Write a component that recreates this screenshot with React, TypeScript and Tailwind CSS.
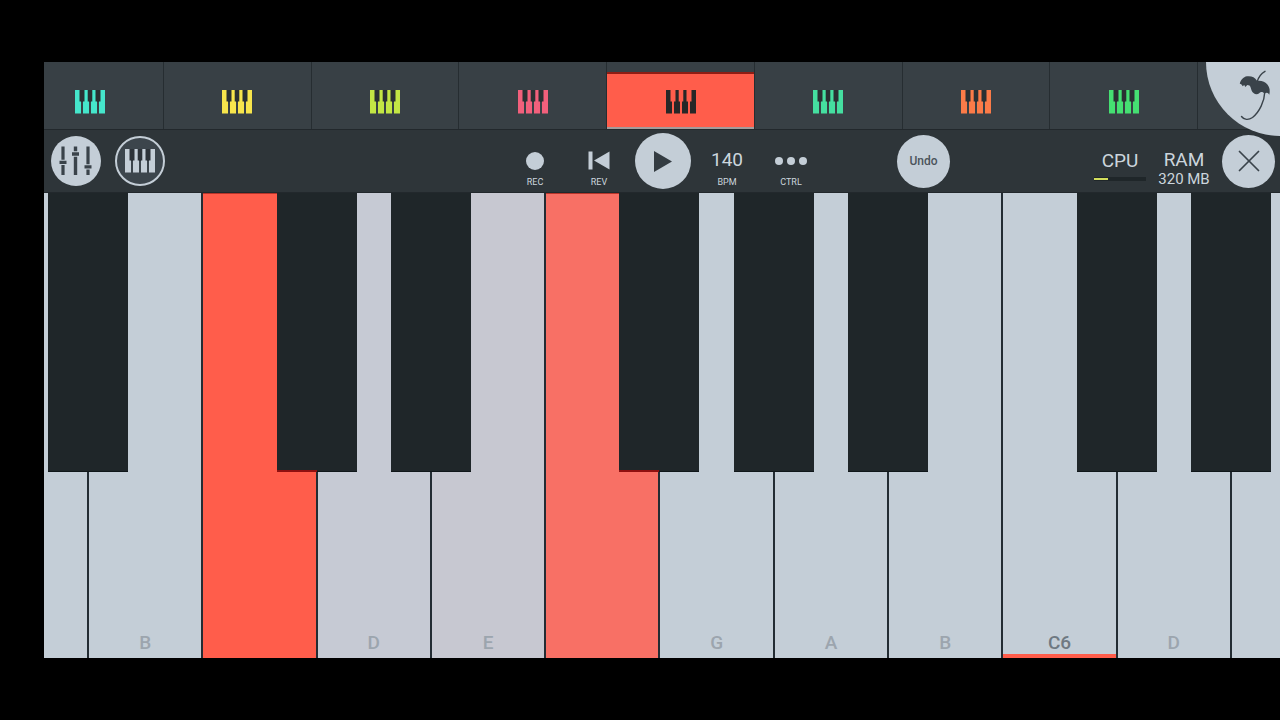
import type { ReactNode } from 'react';
import { X } from 'lucide-react';

const channels = [
  { name: 'Channel 1', color: 'text-[#45e6cb]', cell: 'w-30 pr-7' },
  { name: 'Channel 2', color: 'text-[#f7e54c]', cell: 'flex-1' },
  { name: 'Channel 3', color: 'text-[#c3e644]', cell: 'flex-1' },
  { name: 'Channel 4', color: 'text-[#f2607c]', cell: 'flex-1' },
  { name: 'Channel 5', color: 'text-[#272727]', cell: 'flex-1', selected: true },
  { name: 'Channel 6', color: 'text-[#45dfa0]', cell: 'flex-1' },
  { name: 'Channel 7', color: 'text-[#fb7b48]', cell: 'flex-1' },
  { name: 'Channel 8', color: 'text-[#45df72]', cell: 'flex-1' },
];

type PianoKey = {
  id: string;
  label?: string;
  sharp?: boolean;
  fill: string;
  width: string;
  pressed?: boolean;
  root?: boolean;
};

const idle = 'bg-[#c4ced7]';

const keys: PianoKey[] = [
  { id: 'A4', sharp: true, fill: idle, width: 'w-[45px]' },
  { id: 'B4', label: 'B', fill: idle, width: 'flex-1' },
  { id: 'C5', sharp: true, fill: 'bg-[#ff5d4b]', width: 'flex-1', pressed: true },
  { id: 'D5', label: 'D', sharp: true, fill: 'bg-[#c6cad4]', width: 'flex-1' },
  { id: 'E5', label: 'E', fill: 'bg-[#c7c8d1]', width: 'flex-1' },
  { id: 'F5', sharp: true, fill: 'bg-[#f87065]', width: 'flex-1', pressed: true },
  { id: 'G5', label: 'G', sharp: true, fill: idle, width: 'flex-1' },
  { id: 'A5', label: 'A', sharp: true, fill: idle, width: 'flex-1' },
  { id: 'B5', label: 'B', fill: idle, width: 'flex-1' },
  { id: 'C6', label: 'C6', sharp: true, fill: idle, width: 'flex-1', root: true },
  { id: 'D6', label: 'D', sharp: true, fill: idle, width: 'flex-1' },
  { id: 'E6', fill: idle, width: 'w-12' },
];

const KeysIcon = ({ className = '', shaded = false }: { className?: string; shaded?: boolean }) => (
  <svg viewBox="0 0 30 24" className={`h-6 w-[30px] ${className}`} fill="currentColor" aria-hidden="true">
    {shaded && <path d="M4 0H26V12H4z" fill="#000" opacity="0.25" />}
    <path d="M0 0H4.5V11.5H6V23.6H0z" />
    <path d="M9.500 0H12.7V11.5H14V23.6H8V11.5H9.500z" />
    <path d="M17.3 0H20.5V11.5H22V23.6H16V11.5H17.3z" />
    <path d="M25.5 0H30V23.6H24V11.5H25.5z" />
  </svg>
);

const MixerIcon = () => (
  <svg viewBox="0 0 34 30" className="h-[30px] w-[34px]" fill="#3a434a" aria-hidden="true">
    <path d="M2.4 0.5H5.600V13.7H2.4zM0.5 14.7H7.5V18H0.5zM2.4 19H5.600V29H2.4z" />
    <path d="M14.8 0.5H18.2V5.300H14.8zM13 6.300H20V9.700H13zM14.8 10.7H18.2V29H14.8z" />
    <path d="M27.4 0.5H30.6V18.2H27.4zM25.5 19.2H32.5V22.5H25.5zM27.4 23.5H30.6V29H27.4z" />
  </svg>
);

const PalmLogo = () => (
  <svg viewBox="0 0 34 52" className="h-[52px] w-[34px]" aria-hidden="true">
    <path d="M26 1.3C22 3.500 19.500 7 18 12" fill="none" stroke="#3a434a" strokeWidth="1.4" strokeLinecap="round" />
    <path
      d="M0.8 13.8C1.4 10.5 4.3 6.800 8 6.300C12.500 5.800 15.500 7 18.2 11C22 10.3 26.3 12 28.6 14.8C30.8 17.500 31.2 21 30.3 24.7C29.5 23.3 28.7 22.6 27.7 22.7L25.500 23.5C24.5 22.2 22.8 21.6 21.5 22.2C20.4 22.8 19.500 24.3 17.7 24.3C15.2 24 13.4 22.7 12.6 20.5C11.8 18.500 11.8 17 10.5 15.6L8.3 14.900L6.300 16.9L5.300 14.900L3.600 16.3C3 14.7 2.2 14 0.8 13.8z"
      fill="#3a434a"
    />
    <path d="M25.7 22.5C25.500 31 20.5 42 13.500 47.500C9.500 50.3 5 50 2.500 46.500" fill="none" stroke="#3a434a" strokeWidth="1.4" strokeLinecap="round" />
  </svg>
);

const Transport = ({ label, children }: { label: string; children: ReactNode }) => (
  <button className="flex w-16 flex-col items-center">
    <span className="flex h-6 items-center justify-center">{children}</span>
    <span className="mt-[3px] text-[9px] leading-3">{label}</span>
  </button>
);

export default function App() {
  return (
    <div className="min-h-screen bg-black py-[62px] pl-11 font-[Roboto,sans-serif]">
      <main className="relative overflow-hidden">
        {/* Channel rack */}
        <nav className="flex h-[68px] border-b border-[#22282c] bg-[#384045]" aria-label="Channels">
          {channels.map((channel) => (
            <div key={channel.name} className={`flex border-r border-[#262d31] ${channel.cell} ${channel.selected ? 'pt-[10px]' : ''}`}>
              <button
                aria-label={channel.name}
                className={`flex flex-1 justify-center ${channel.color} ${
                  channel.selected ? 'border-t-2 border-b-2 border-t-[#8f1d14] border-b-[#a39b9b] bg-[#ff5d4b] pt-4' : 'pt-7'
                }`}
              >
                <KeysIcon shaded={!channel.selected} />
              </button>
            </div>
          ))}
          <div className="w-[82px]" />
        </nav>
        <button
          aria-label="Main menu"
          className="absolute top-0 right-0 flex size-[74px] justify-end rounded-bl-full bg-[#c4ced7] pt-2 pr-[7px]"
        >
          <PalmLogo />
        </button>

        {/* Toolbar */}
        <header className="flex h-[63px] items-center border-b border-[#22282c] bg-[#2e3539] text-[#ccd5dd]">
          <div className="flex flex-[9] gap-[14px] pl-[7px]">
            <button aria-label="Mixer" className="flex size-[50px] items-center justify-center rounded-full bg-[#c4ced7]">
              <MixerIcon />
            </button>
            <button
              aria-label="Keyboard"
              className="flex size-[50px] items-center justify-center rounded-full border-2 border-[#c4ced7] bg-[#3c454c]"
            >
              <KeysIcon className="text-[#c4ced7]" shaded />
            </button>
          </div>

          <div className="flex items-center">
            <div className="flex pt-[14px]">
              <Transport label="REC">
                <span className="size-[18px] rounded-full bg-[#c4ced7]" />
              </Transport>
              <Transport label="REV">
                <svg viewBox="0 0 22 19" className="h-[19px] w-[22px]" fill="#c4ced7" aria-hidden="true">
                  <path d="M0.5 0.5H4.5V18.5H0.5zM21.5 0.5V18.5L6 9.500z" />
                </svg>
              </Transport>
            </div>
            <div className="flex w-16 justify-center">
              <button aria-label="Play" className="flex size-14 items-center justify-center rounded-full bg-[#c4ced7]">
                <svg viewBox="0 0 18 21" className="h-[21px] w-[18px]" fill="#343c42" aria-hidden="true">
                  <path d="M0 0L18 10.5L0 21z" />
                </svg>
              </button>
            </div>
            <div className="flex pt-[14px]">
              <Transport label="BPM">
                <span className="text-[19px]">140</span>
              </Transport>
              <Transport label="CTRL">
                <span className="flex gap-1">
                  <span className="size-2 rounded-full bg-[#c4ced7]" />
                  <span className="size-2 rounded-full bg-[#c4ced7]" />
                  <span className="size-2 rounded-full bg-[#c4ced7]" />
                </span>
              </Transport>
            </div>
          </div>

          <div className="flex flex-[4] justify-center">
            <button className="size-[53px] rounded-full bg-[#c4ced7] text-xs font-medium text-[#4b545b]">Undo</button>
          </div>

          <div className="flex flex-[5] items-center justify-end gap-3 pr-[5px]">
            <div className="flex w-[52px] flex-col items-center pt-2 text-[19px] leading-6">
              CPU
              <div className="mt-1 w-full bg-[#1f2629] py-px">
                <div className="h-[2px] w-[14px] bg-[#d3de5c]" />
              </div>
            </div>
            <div className="flex w-[52px] flex-col items-center pt-4">
              <span className="text-[19px] leading-5">RAM</span>
              <span className="text-[15px] leading-[18px] whitespace-nowrap">320 MB</span>
            </div>
            <button aria-label="Close" className="flex size-[53px] items-center justify-center rounded-full bg-[#c4ced7]">
              <X size={38} strokeWidth={1.1} color="#3a434a" />
            </button>
          </div>
        </header>

        {/* Keyboard */}
        <ul className="flex h-[465px]">
          {keys.map((key) => (
            <li key={key.id} className={`relative flex ${key.width}`}>
              <button
                aria-label={key.id}
                className={`flex flex-1 flex-col items-center justify-end text-[19px] leading-5 font-medium ${key.fill} ${
                  key.id === 'E6' ? '' : 'border-r-2 border-r-[#232c33]'
                } ${key.pressed ? 'border-t border-t-[#b8352a]' : ''} ${key.root ? 'text-[#6f7982]' : 'text-[#9ca5ae]'}`}
              >
                <span className="pb-px">{key.label}</span>
                <span className={`h-1 w-full ${key.root ? 'bg-[#ff5d4b]' : ''}`} />
              </button>
              {key.sharp && (
                <button
                  aria-label={`${key.id} sharp`}
                  className="absolute top-0 -right-[39px] z-10 h-[279px] w-20 border-b border-[#10171a] bg-[#1f2629]"
                >
                  {key.pressed && <span className="absolute -bottom-px left-0 h-[2px] w-10 bg-[#8f1010]" />}
                </button>
              )}
            </li>
          ))}
        </ul>
      </main>
    </div>
  );
}
